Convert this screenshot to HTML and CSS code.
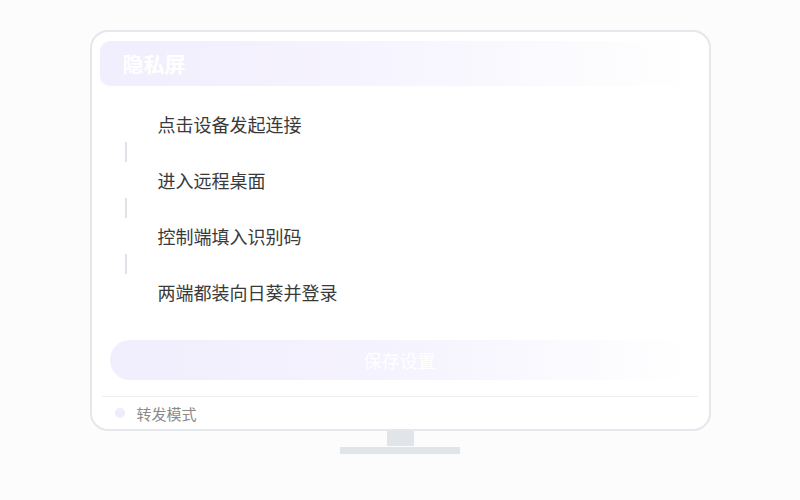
FILE: index.html
```html
<!DOCTYPE html>
<html lang="zh-CN">
<head>
<meta charset="utf-8">
<title>隐私屏</title>
<link rel="stylesheet" href="styles.css">
</head>
<body>
<div class="page">
  <div class="monitor">
    <div class="header">隐私屏</div>
    <div class="steps">
      <div class="step">点击设备发起连接</div>
      <div class="connector"></div>
      <div class="step">进入远程桌面</div>
      <div class="connector"></div>
      <div class="step">控制端填入识别码</div>
      <div class="connector"></div>
      <div class="step">两端都装向日葵并登录</div>
    </div>
    <div class="save">保存设置</div>
    <div class="divider"></div>
    <div class="footer"><span class="dot"></span><span class="mode">转发模式</span></div>
  </div>
  <div class="neck"></div>
  <div class="base"></div>
</div>
</body>
</html>
```
FILE: styles.css
```css
html, body {
  margin: 0;
  padding: 0;
  background: #fcfcfd;
  font-family: "Noto Sans CJK SC", "Noto Sans", sans-serif;
}
.page {
  width: 800px;
  height: 500px;
  display: flex;
  flex-direction: column;
  align-items: center;
  padding-top: 30px;
  box-sizing: border-box;
}
.monitor {
  width: 621px;
  height: 401px;
  box-sizing: border-box;
  border: 2px solid #e4e7eb;
  border-radius: 18px;
  background: #ffffff;
  padding: 9px 9px 0 8px;
  display: flex;
  flex-direction: column;
}
.header {
  height: 45px;
  border-radius: 10px;
  background: linear-gradient(90deg, #f1eefd 0%, #f6f4fe 45%, #ffffff 100%);
  color: #ffffff;
  font-weight: 700;
  font-size: 21px;
  line-height: 45px;
  padding-left: 23px;
}
.steps {
  margin-top: 26px;
  display: flex;
  flex-direction: column;
}
.step {
  height: 24px;
  line-height: 24px;
  font-size: 18px;
  color: #3a3a3a;
  padding-left: 58px;
}
.connector {
  width: 2px;
  height: 20px;
  margin: 6px 0 6px 25px;
  background: #e1e1ea;
}
.save {
  margin: 36px 0 0 10px;
  width: 580px;
  height: 40px;
  border-radius: 20px;
  background: linear-gradient(90deg, #f1eefd 0%, #f5f3fe 50%, #ffffff 100%);
  color: #ffffff;
  font-size: 18px;
  line-height: 40px;
  text-align: center;
}
.divider {
  margin: 16px 2px 0 2px;
  height: 1px;
  background: #eceef1;
}
.footer {
  height: 32px;
  display: flex;
  align-items: center;
  padding-left: 15px;
}
.dot {
  width: 10px;
  height: 10px;
  border-radius: 50%;
  background: #eeebfc;
}
.mode {
  margin-left: 12px;
  font-size: 15px;
  color: #8a8a8a;
}
.neck {
  width: 27px;
  height: 15px;
  background: #e1e4e8;
}
.base {
  margin-top: 1px;
  width: 120px;
  height: 7px;
  background: #e1e4e8;
}
```
